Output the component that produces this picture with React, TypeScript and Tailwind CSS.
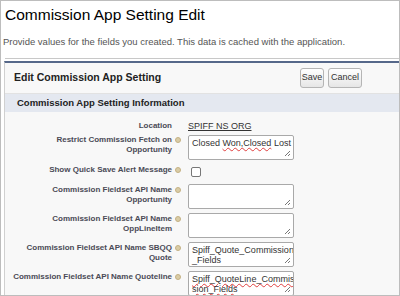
import React from "react";

const font = { fontFamily: '"Liberation Sans", Arial, sans-serif' };

const wavy = "underline decoration-wavy decoration-[#e04040] decoration-1 underline-offset-1";

function InfoIcon() {
  return (
    <span className="inline-block w-[6px] h-[6px] rounded-full bg-[#d9cca6] border border-[#c4b183]" />
  );
}

function Grip() {
  return (
    <svg className="absolute right-[2px] bottom-[2px]" width="7" height="7" viewBox="0 0 7 7">
      <path d="M6 1L1 6M6 4L4 6" stroke="#777" strokeWidth="1" />
    </svg>
  );
}

function TextArea({ children }: { children?: React.ReactNode }) {
  return (
    <div className="relative w-[106px] h-[25px] bg-white border border-[#a9a9a9] rounded-[2px] px-[3px] pt-[2px] text-[9px] leading-[10px] text-[#333] overflow-hidden whitespace-pre">
      {children}
      <Grip />
    </div>
  );
}

function Row({
  label,
  icon = true,
  children,
  className = "",
  labelPad = "pt-[1px]",
}: {
  label: React.ReactNode;
  icon?: boolean;
  children: React.ReactNode;
  className?: string;
  labelPad?: string;
}) {
  return (
    <div className={"flex items-start " + className}>
      <div className={"w-[167px] text-right text-[8px] leading-[10px] font-bold text-[#4a4a56] " + labelPad}>
        {label}
      </div>
      <div className={"w-[16px] pl-[3px] leading-none " + labelPad}>
        <div className="h-[10px] flex items-center">{icon && <InfoIcon />}</div>
      </div>
      <div>{children}</div>
    </div>
  );
}

export default function App() {
  return (
    <div style={font} className="w-[400px] h-[296px] overflow-hidden bg-white border border-[#bdbdbd]">
      <div className="pl-[4px] pt-[2px] text-[15.5px] leading-[24px] text-black">Commission App Setting Edit</div>
      <div className="pl-[2px] pt-[9px] text-[9.5px] leading-[12px] text-[#555] whitespace-nowrap">
        Provide values for the fields you created. This data is cached with the application.
      </div>
      <div className="ml-[4px] mt-[10px] border-t border-[#c8c8c8]" />
      <div className="ml-[3px] mt-[2px] border-t-2 border-l border-t-[#56688a] border-l-[#d0d0d0] bg-[#f8f8f8] h-[240px]">
        <div className="flex items-center justify-between h-[30px] pl-[9px] pr-[37px]">
          <div className="text-[10.5px] font-bold text-[#222]">Edit Commission App Setting</div>
          <div className="flex gap-[4px]">
            <button className="h-[20px] w-[24px] text-[9px] text-[#333] border border-[#b5b5b5] rounded-[3px] bg-gradient-to-b from-white to-[#e6e6e6]">
              Save
            </button>
            <button className="h-[20px] w-[34px] text-[9px] text-[#333] border border-[#b5b5b5] rounded-[3px] bg-gradient-to-b from-white to-[#e6e6e6]">
              Cancel
            </button>
          </div>
        </div>
        <div className="border-t border-[#e2e2e2]" />
        <div className="bg-[#e4e8f0] h-[18px] pl-[12px] text-[9.5px] leading-[18px] font-bold text-[#222]">
          Commission App Setting Information
        </div>
        <div className="flex flex-col pt-[9px]">
          <Row label="Location" icon={false} labelPad="pt-0">
            <div className="text-[9px] leading-[10px] text-[#333] underline">SPIFF NS ORG</div>
          </Row>
          <Row label={<>Restrict Commission Fetch on<br />Opportunity</>} className="mt-[4px]" labelPad="pt-0">
            <TextArea>
              Closed <span className={wavy}>Won,Closed</span> Lost
            </TextArea>
          </Row>
          <Row label="Show Quick Save Alert Message" className="mt-[4px] h-[16px]" labelPad="pt-[1px]">
            <div className="w-[10px] h-[10px] ml-[3px] mt-[3px] border border-[#777] rounded-[2px] bg-white" />
          </Row>
          <Row label={<>Commission Fieldset API Name<br />Opportunity</>} className="mt-[4px]">
            <TextArea />
          </Row>
          <Row label={<>Commission Fieldset API Name<br />OppLineItem</>} className="mt-[4px]">
            <TextArea />
          </Row>
          <Row label={<>Commission Fieldset API Name SBQQ<br />Quote</>} className="mt-[4px]">
            <TextArea>
              {"Spiff_Quote_Commission\n_Fields"}
            </TextArea>
          </Row>
          <Row label="Commission Fieldset API Name Quoteline" className="mt-[4px]">
            <TextArea>
              <span className={wavy}>Spiff_QuoteLine_Commis</span>
              {"\n"}
              <span className={wavy}>sion_Fields</span>
            </TextArea>
          </Row>
        </div>
      </div>
    </div>
  );
}
